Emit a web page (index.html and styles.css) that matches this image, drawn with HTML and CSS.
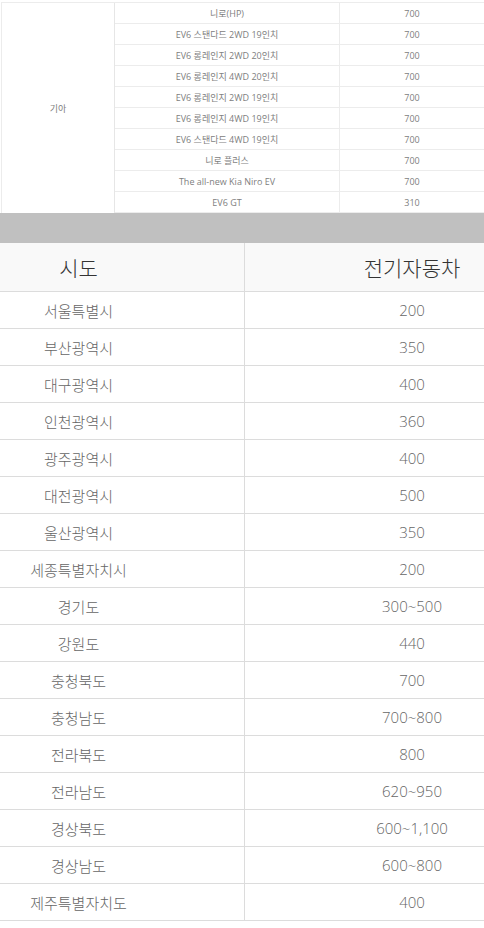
FILE: index.html
```html
<!DOCTYPE html>
<html lang="ko">
<head>
<meta charset="utf-8">
<title>전기자동차 보조금</title>
<link rel="stylesheet" href="styles.css">
</head>
<body>
<div class="models">
  <div class="maker">기아</div>
  <div class="cell name">니로(HP)</div><div class="cell val">700</div>
  <div class="cell name">EV6 스탠다드 2WD 19인치</div><div class="cell val">700</div>
  <div class="cell name">EV6 롱레인지 2WD 20인치</div><div class="cell val">700</div>
  <div class="cell name">EV6 롱레인지 4WD 20인치</div><div class="cell val">700</div>
  <div class="cell name">EV6 롱레인지 2WD 19인치</div><div class="cell val">700</div>
  <div class="cell name">EV6 롱레인지 4WD 19인치</div><div class="cell val">700</div>
  <div class="cell name">EV6 스탠다드 4WD 19인치</div><div class="cell val">700</div>
  <div class="cell name">니로 플러스</div><div class="cell val">700</div>
  <div class="cell name">The all-new Kia Niro EV</div><div class="cell val">700</div>
  <div class="cell name">EV6 GT</div><div class="cell val">310</div>
</div>
<div class="band"></div>
<div class="regions">
  <div class="head left">시도</div><div class="head right">전기자동차</div>
  <div class="row left">서울특별시</div><div class="row right">200</div>
  <div class="row left">부산광역시</div><div class="row right">350</div>
  <div class="row left">대구광역시</div><div class="row right">400</div>
  <div class="row left">인천광역시</div><div class="row right">360</div>
  <div class="row left">광주광역시</div><div class="row right">400</div>
  <div class="row left">대전광역시</div><div class="row right">500</div>
  <div class="row left">울산광역시</div><div class="row right">350</div>
  <div class="row left">세종특별자치시</div><div class="row right">200</div>
  <div class="row left">경기도</div><div class="row right">300~500</div>
  <div class="row left">강원도</div><div class="row right">440</div>
  <div class="row left">충청북도</div><div class="row right">700</div>
  <div class="row left">충청남도</div><div class="row right">700~800</div>
  <div class="row left">전라북도</div><div class="row right">800</div>
  <div class="row left">전라남도</div><div class="row right">620~950</div>
  <div class="row left">경상북도</div><div class="row right">600~1,100</div>
  <div class="row left">경상남도</div><div class="row right">600~800</div>
  <div class="row left">제주특별자치도</div><div class="row right">400</div>
</div>
</body>
</html>
```

FILE: styles.css
```css
html, body {
  margin: 0;
  padding: 0;
  background: #ffffff;
}
body {
  font-family: "Open Sans", "Noto Sans CJK KR", sans-serif;
}
.models {
  display: grid;
  grid-template-columns: 113px 225px 1fr;
  grid-auto-rows: 21px;
  margin: 2px 0 0 1px;
  border-top: 1px solid #ececec;
  border-left: 1px solid #ececec;
  font-size: 9px;
  color: #808080;
}
.maker {
  grid-row: span 10;
  display: flex;
  align-items: center;
  justify-content: center;
  border-right: 1px solid #e6e6e6;
}
.cell {
  display: flex;
  align-items: center;
  justify-content: center;
  border-bottom: 1px solid #ececec;
  box-sizing: border-box;
}
.name {
  border-right: 1px solid #ececec;
}
.band {
  height: 30px;
  background: #c0c0c0;
}
.regions {
  display: grid;
  grid-template-columns: 245px 1fr;
}
.head, .row {
  display: flex;
  align-items: center;
  justify-content: center;
  border-bottom: 1px solid #dcdcdc;
  box-sizing: border-box;
  font-weight: 300;
}
.head {
  height: 49px;
  background: #f9f9f9;
  font-size: 21px;
  color: #333333;
}
.row {
  height: 37px;
  font-size: 15px;
  color: #666666;
}
.left {
  border-right: 1px solid #dcdcdc;
  padding-right: 87px;
}
.right {
  padding-left: 95px;
}
```
